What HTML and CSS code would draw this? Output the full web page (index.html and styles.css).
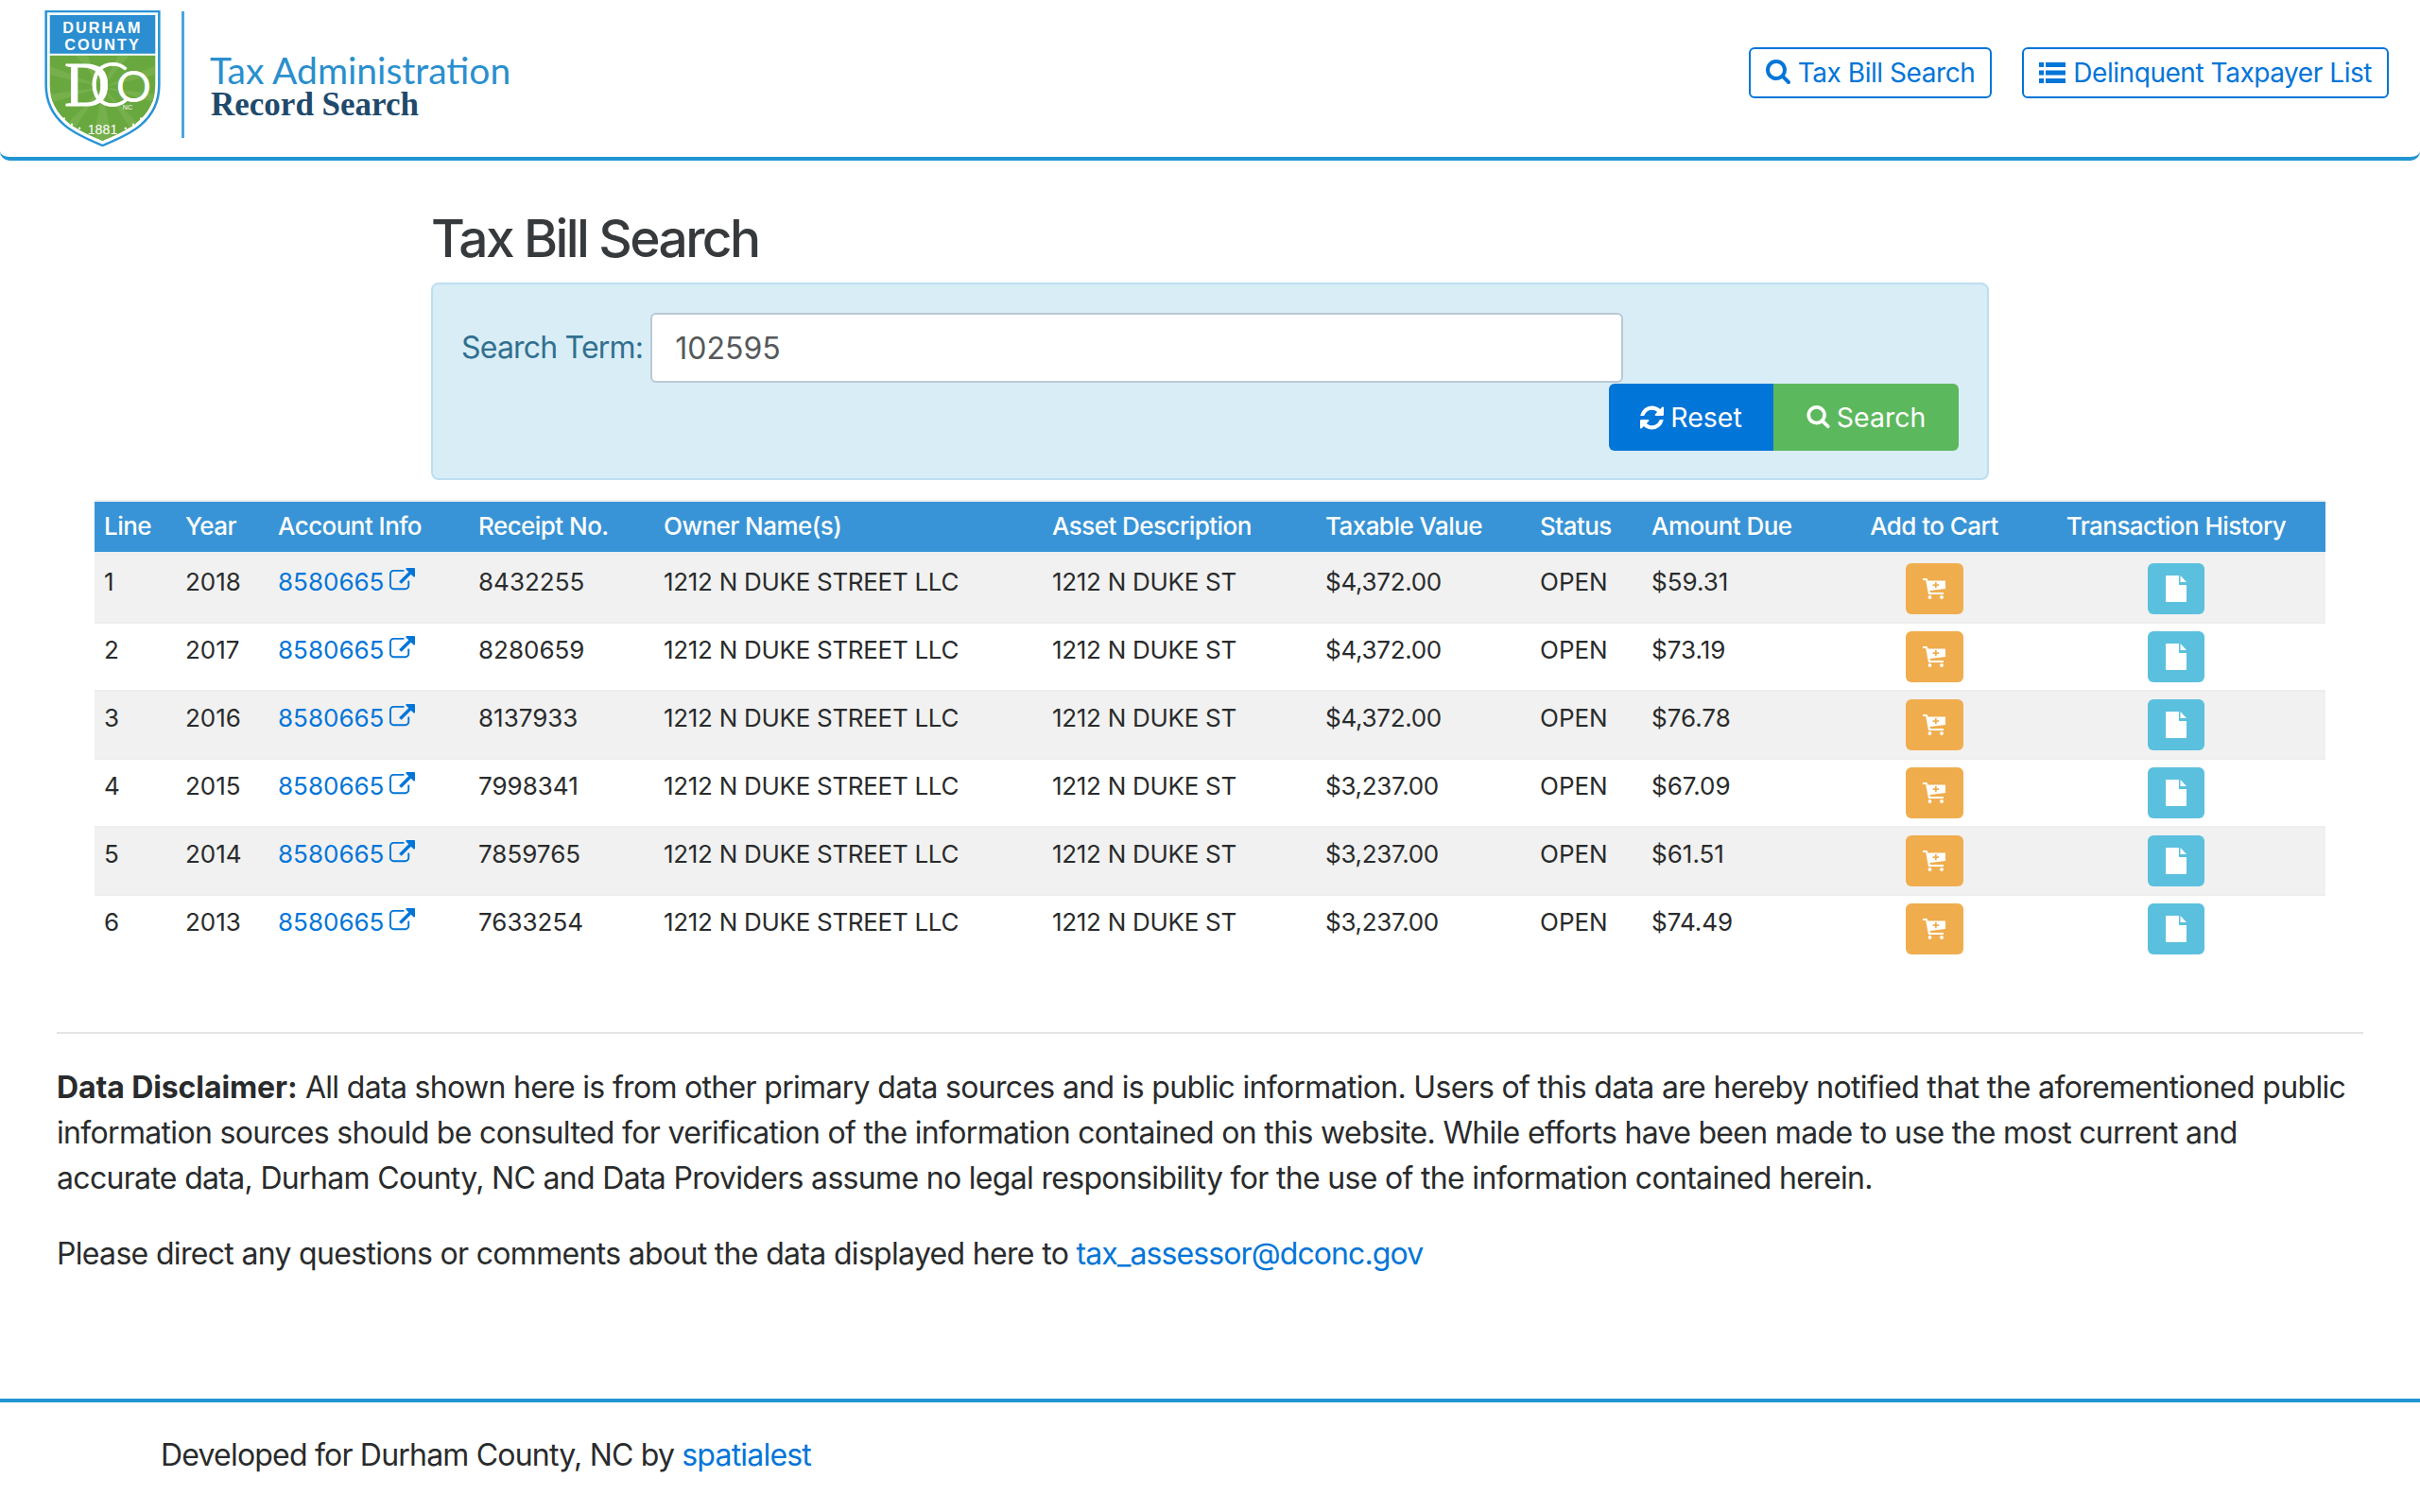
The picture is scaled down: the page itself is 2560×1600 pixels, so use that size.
FILE: index.html
```html
<!DOCTYPE html>
<html>
<head>
    <meta charset="UTF-8">
    <title>Tax Bill Search</title>
    <link rel="stylesheet" href="styles.css">
</head>
<body>
    <svg class="iconDefs" width="0" height="0">
        <symbol id="iconSearch" viewBox="0 0 1664 1792">
            <path d="M1152 704q0-185-131.5-316.5t-316.5-131.5-316.5 131.5-131.5 316.5 131.5 316.5 316.5 131.5 316.5-131.5 131.5-316.5zm512 832q0 52-38 90t-90 38q-54 0-90-38l-343-342q-179 124-399 124-143 0-273.5-55.5t-225-150-150-225-55.5-273.5 55.5-273.5 150-225 225-150 273.5-55.5 273.5 55.5 225 150 150 225 55.5 273.5q0 220-124 399l343 343q37 37 37 90z"/>
        </symbol>
        <symbol id="iconList" viewBox="0 0 28 24">
            <path d="M0 1h5v5H0zM7 1h21v5H7zM0 9.500h5v5H0zM7 9.500h21v5H7zM0 18h5v5H0zM7 18h21v5H7z"/>
        </symbol>
        <symbol id="iconRefresh" viewBox="128 128 1536 1536">
            <path d="M1639 1056q0 5-1 7-64 268-268 434.500t-478 166.500q-146 0-282.500-55t-243.500-157l-129 129q-19 19-45 19t-45-19-19-45v-448q0-26 19-45t45-19h448q26 0 45 19t19 45-19 45l-137 137q71 66 161 102t187 36q134 0 250-65t186-179q11-17 53-117 8-23 30-23h192q13 0 22.500 9.500t9.500 22.500zm25-800v448q0 26-19 45t-45 19h-448q-26 0-45-19t-19-45 19-45l138-138q-148-137-349-137-134 0-250 65t-186 179q-11 17-53 117-8 23-30 23h-199q-13 0-22.500-9.500t-9.500-22.500v-7q65-268 270-434.500t480-166.500q146 0 284 55.500t245 156.500l130-129q19-19 45-19t45 19 19 45z"/>
        </symbol>
        <symbol id="iconExternal" viewBox="0 0 1792 1792">
            <path d="M1408 928v320q0 119-84.500 203.500t-203.500 84.500h-832q-119 0-203.500-84.500t-84.500-203.500v-832q0-119 84.500-203.500t203.500-84.500h704q14 0 23 9t9 23v64q0 14-9 23t-23 9h-704q-66 0-113 47t-47 113v832q0 66 47 113t113 47h832q66 0 113-47t47-113v-320q0-14 9-23t23-9h64q14 0 23 9t9 23zm384-864v512q0 26-19 45t-45 19-45-19l-176-176-652 652q-10 10-23 10t-23-10l-114-114q-10-10-10-23t10-23l652-652-176-176q-19-19-19-45t19-45 45-19h512q26 0 45 19t19 45z"/>
        </symbol>
        <symbol id="iconCart" viewBox="0 0 24 22">
            <path d="M0 0h4.500l1 2.500H24v8.500L7.500 13l.4 2H22v2H6L3.200 2H0z M13 4v2.300h-2.400v1.600H13v2.300h1.700V7.900h2.400V6.300h-2.400V4z" fill-rule="evenodd"/>
            <circle cx="7.500" cy="20" r="1.900"/>
            <circle cx="20" cy="20" r="1.900"/>
        </symbol>
        <symbol id="iconFile" viewBox="0 0 22 28">
            <path d="M1 0h13v10h8v17a1 1 0 0 1-1 1H1a1 1 0 0 1-1-1V1a1 1 0 0 1 1-1z"/>
            <path d="M15.500 0L22 7h-6.500z"/>
        </symbol>
    </svg>

    <header class="topBar">
        <div class="brand">
            <svg class="logo" viewBox="0 0 120 142">
                <defs>
                    <clipPath id="logoGreen">
                        <path d="M5 47H115V78C115 114 82 127 60 136C38 127 5 114 5 78Z"/>
                    </clipPath>
                </defs>
                <path d="M1 1H119V78C119 118 84 131 60 141C36 131 1 118 1 78Z" fill="#fff" stroke="#2a94d6" stroke-width="2.500"/>
                <path d="M5 5H115V45H5Z" fill="#2a8ed0"/>
                <path d="M5 47H115V78C115 114 82 127 60 136C38 127 5 114 5 78Z" fill="#69a83f"/>
                <g clip-path="url(#logoGreen)">
                    <path d="M60 80L0 56V66ZM60 80L0 88V98ZM60 80L12 130H26ZM60 80L50 140H70ZM60 80L94 130H108ZM60 80L120 98V88ZM60 80L120 66V56ZM60 80L88 47H76ZM60 80L32 47H44Z" fill="#76b04c"/>
                </g>
                <text class="logoTop" x="60" y="24" text-anchor="middle">DURHAM</text>
                <text class="logoTop" x="60" y="41" text-anchor="middle">COUNTY</text>
                <text class="logoD" x="20" y="100">D</text>
                <text class="logoC" x="46" y="100">C</text>
                <text class="logoO" x="74" y="96">O</text>
                <text class="logoNc" x="81" y="104">NC</text>
                <text class="logoYear" x="60" y="129" text-anchor="middle">1881</text>
                <path d="M19 112h2v2h-2zM27 118h2v2h-2zM35 122h2v2h-2zM83 122h2v2h-2zM91 118h2v2h-2zM99 112h2v2h-2z" fill="#fff"/>
            </svg>
            <div class="brandText">
                <div class="brandTitle">Tax Administration</div>
                <div class="brandSub">Record Search</div>
            </div>
        </div>
        <nav class="topNav">
            <a class="navBtn" href="#"><svg class="icon navIcon"><use href="#iconSearch"/></svg>Tax Bill Search</a>
            <a class="navBtn" href="#"><svg class="icon navIconList"><use href="#iconList"/></svg>Delinquent Taxpayer List</a>
        </nav>
    </header>

    <main>
        <section class="searchSection">
            <h1 class="pageTitle">Tax Bill Search</h1>
            <form class="searchPanel">
                <div class="searchRow">
                    <label class="searchLabel" for="term">Search Term:</label>
                    <input class="searchInput" id="term" type="text" value="102595">
                </div>
                <div class="searchButtons">
                    <button class="btnReset" type="button"><svg class="icon btnIcon"><use href="#iconRefresh"/></svg>Reset</button>
                    <button class="btnSearch" type="button"><svg class="icon btnIcon"><use href="#iconSearch"/></svg>Search</button>
                </div>
            </form>
        </section>

        <table class="billTable">
            <colgroup>
                <col class="colLine"><col class="colYear"><col class="colAccount"><col class="colReceipt">
                <col class="colOwner"><col class="colAsset"><col class="colValue"><col class="colStatus">
                <col class="colDue"><col class="colCart"><col class="colHistory">
            </colgroup>
            <thead>
                <tr>
                    <th>Line</th><th>Year</th><th>Account Info</th><th>Receipt No.</th><th>Owner Name(s)</th>
                    <th>Asset Description</th><th>Taxable Value</th><th>Status</th><th>Amount Due</th>
                    <th class="centered">Add to Cart</th><th class="centered">Transaction History</th>
                </tr>
            </thead>
            <tbody>
                <tr>
                    <td>1</td><td>2018</td>
                    <td><a href="#">8580665<svg class="icon extIcon"><use href="#iconExternal"/></svg></a></td>
                    <td>8432255</td><td>1212 N DUKE STREET LLC</td><td>1212 N DUKE ST</td><td>$4,372.00</td><td>OPEN</td><td>$59.31</td>
                    <td class="centered"><a class="cartBtn" href="#"><svg class="icon cartIcon"><use href="#iconCart"/></svg></a></td>
                    <td class="centered"><a class="historyBtn" href="#"><svg class="icon fileIcon"><use href="#iconFile"/></svg></a></td>
                </tr>
                <tr>
                    <td>2</td><td>2017</td>
                    <td><a href="#">8580665<svg class="icon extIcon"><use href="#iconExternal"/></svg></a></td>
                    <td>8280659</td><td>1212 N DUKE STREET LLC</td><td>1212 N DUKE ST</td><td>$4,372.00</td><td>OPEN</td><td>$73.19</td>
                    <td class="centered"><a class="cartBtn" href="#"><svg class="icon cartIcon"><use href="#iconCart"/></svg></a></td>
                    <td class="centered"><a class="historyBtn" href="#"><svg class="icon fileIcon"><use href="#iconFile"/></svg></a></td>
                </tr>
                <tr>
                    <td>3</td><td>2016</td>
                    <td><a href="#">8580665<svg class="icon extIcon"><use href="#iconExternal"/></svg></a></td>
                    <td>8137933</td><td>1212 N DUKE STREET LLC</td><td>1212 N DUKE ST</td><td>$4,372.00</td><td>OPEN</td><td>$76.78</td>
                    <td class="centered"><a class="cartBtn" href="#"><svg class="icon cartIcon"><use href="#iconCart"/></svg></a></td>
                    <td class="centered"><a class="historyBtn" href="#"><svg class="icon fileIcon"><use href="#iconFile"/></svg></a></td>
                </tr>
                <tr>
                    <td>4</td><td>2015</td>
                    <td><a href="#">8580665<svg class="icon extIcon"><use href="#iconExternal"/></svg></a></td>
                    <td>7998341</td><td>1212 N DUKE STREET LLC</td><td>1212 N DUKE ST</td><td>$3,237.00</td><td>OPEN</td><td>$67.09</td>
                    <td class="centered"><a class="cartBtn" href="#"><svg class="icon cartIcon"><use href="#iconCart"/></svg></a></td>
                    <td class="centered"><a class="historyBtn" href="#"><svg class="icon fileIcon"><use href="#iconFile"/></svg></a></td>
                </tr>
                <tr>
                    <td>5</td><td>2014</td>
                    <td><a href="#">8580665<svg class="icon extIcon"><use href="#iconExternal"/></svg></a></td>
                    <td>7859765</td><td>1212 N DUKE STREET LLC</td><td>1212 N DUKE ST</td><td>$3,237.00</td><td>OPEN</td><td>$61.51</td>
                    <td class="centered"><a class="cartBtn" href="#"><svg class="icon cartIcon"><use href="#iconCart"/></svg></a></td>
                    <td class="centered"><a class="historyBtn" href="#"><svg class="icon fileIcon"><use href="#iconFile"/></svg></a></td>
                </tr>
                <tr>
                    <td>6</td><td>2013</td>
                    <td><a href="#">8580665<svg class="icon extIcon"><use href="#iconExternal"/></svg></a></td>
                    <td>7633254</td><td>1212 N DUKE STREET LLC</td><td>1212 N DUKE ST</td><td>$3,237.00</td><td>OPEN</td><td>$74.49</td>
                    <td class="centered"><a class="cartBtn" href="#"><svg class="icon cartIcon"><use href="#iconCart"/></svg></a></td>
                    <td class="centered"><a class="historyBtn" href="#"><svg class="icon fileIcon"><use href="#iconFile"/></svg></a></td>
                </tr>
            </tbody>
        </table>

        <section class="disclaimer">
            <p><strong>Data Disclaimer:</strong> All data shown here is from other primary data sources and is public information. Users of this data are hereby notified that the aforementioned public information sources should be consulted for verification of the information contained on this website. While efforts have been made to use the most current and accurate data, Durham County, NC and Data Providers assume no legal responsibility for the use of the information contained herein.</p>
            <p>Please direct any questions or comments about the data displayed here to <a class="mailLink" href="#">tax_assessor@dconc.gov</a></p>
        </section>
    </main>

    <footer class="footer">
        Developed for Durham County, NC by <a href="#">spatialest</a>
    </footer>
</body>
</html>
```
FILE: styles.css
```css
body {
    margin: 0;
    font-family: Inter, "Noto Sans", sans-serif;
    font-size: 32px;
    line-height: 48px;
    letter-spacing: -0.68px;
    color: #292b2c;
    background-color: #fff;
}

a {
    color: #0275d8;
    text-decoration: none;
}

.iconDefs {
    display: block;
}

.icon {
    fill: currentColor;
    flex: none;
}

/* top bar */
.topBar {
    display: flex;
    justify-content: space-between;
    align-items: flex-start;
    box-sizing: border-box;
    height: 170px;
    padding: 11px 33px 0 47px;
    border-bottom: 4px solid #2196d3;
    border-radius: 0 0 10px 10px;
}

.brand {
    display: flex;
    align-items: center;
}

.logo {
    width: 123px;
    height: 144px;
}

.logoTop {
    font-family: "Liberation Sans", sans-serif;
    font-size: 16px;
    font-weight: 700;
    letter-spacing: 2px;
    fill: #fff;
}

.logoD {
    font-family: "Liberation Serif", serif;
    font-size: 66px;
    fill: #fff;
    stroke: #fff;
    stroke-width: 0.800;
}

.logoC {
    font-family: Lato, sans-serif;
    font-size: 62px;
    font-weight: 300;
    fill: #fff;
    stroke: #fff;
    stroke-width: 0.800;
}

.logoO {
    font-family: Lato, sans-serif;
    font-size: 46px;
    font-weight: 400;
    fill: #fff;
}

.logoNc {
    font-family: "Liberation Sans", sans-serif;
    font-size: 7px;
    letter-spacing: 0;
    fill: #fff;
}

.logoYear {
    font-family: "Liberation Sans", sans-serif;
    font-size: 14px;
    letter-spacing: 0;
    fill: #fff;
}

.brandText {
    margin-left: 22px;
    margin-top: -8px;
    padding: 20px 0 0 27px;
    box-sizing: border-box;
    height: 134px;
    border-left: 3px solid #4aa5dc;
    display: flex;
    flex-direction: column;
    justify-content: center;
    letter-spacing: 0;
}

.brandTitle {
    font-family: Lato, sans-serif;
    font-size: 39px;
    line-height: 44px;
    color: #2a8fce;
}

.brandSub {
    font-family: "Liberation Serif", serif;
    font-size: 35px;
    font-weight: 700;
    line-height: 30px;
    margin-left: 1px;
    color: #1f4a6b;
}

.topNav {
    display: flex;
    gap: 32px;
    margin-top: 39px;
}

.navBtn {
    display: flex;
    align-items: center;
    height: 54px;
    box-sizing: border-box;
    padding: 0 16px;
    font-size: 28px;
    letter-spacing: -0.45px;
    border: 2px solid #0275d8;
    border-radius: 6px;
}

.navIcon {
    width: 26px;
    height: 28px;
    margin-right: 8px;
}

.navIconList {
    width: 28px;
    height: 24px;
    margin-right: 8px;
}

/* search form */
.searchSection {
    width: 1648px;
    margin: 0 auto;
    padding-top: 49px;
}

.pageTitle {
    margin: 0 0 13px;
    font-size: 55px;
    font-weight: 500;
    line-height: 67px;
    letter-spacing: -2.600px;
    color: #373a3c;
}

.searchPanel {
    box-sizing: border-box;
    height: 209px;
    padding: 30px;
    background-color: #d9edf7;
    border: 2px solid #bcdff1;
    border-radius: 8px;
}

.searchRow {
    display: flex;
    align-items: center;
    gap: 8px;
}

.searchLabel {
    color: #31708f;
    letter-spacing: -0.8px;
}

.searchInput {
    box-sizing: border-box;
    width: 1029px;
    height: 74px;
    padding: 0 24px;
    font-family: inherit;
    font-size: 32px;
    color: #55595c;
    background-color: #fff;
    border: 2px solid #b9c9d4;
    border-radius: 6px;
}

.searchButtons {
    display: flex;
    justify-content: flex-end;
    margin-top: 1px;
}

.searchButtons button {
    display: flex;
    align-items: center;
    justify-content: center;
    height: 71px;
    padding: 0;
    font-family: inherit;
    font-size: 28.500px;
    color: #fff;
    border: 0;
}

.btnReset {
    width: 174px;
    background-color: #0275d8;
    border-radius: 6px 0 0 6px;
}

.btnSearch {
    width: 196px;
    background-color: #5cb85c;
    border-radius: 0 6px 6px 0;
}

.btnIcon {
    width: 25px;
    height: 26px;
    margin-right: 7px;
}

/* bills */
.billTable {
    width: 2360px;
    margin: 21px 100px 0;
    table-layout: fixed;
    border-collapse: collapse;
    font-size: 26px;
    line-height: 39px;
    letter-spacing: 0;
}

.colLine { width: 86px; }
.colYear { width: 98px; }
.colAccount { width: 212px; }
.colReceipt { width: 196px; }
.colOwner { width: 411px; }
.colAsset { width: 289px; }
.colValue { width: 227px; }
.colStatus { width: 118px; }
.colDue { width: 211px; }
.colCart { width: 196px; }
.colHistory { width: 316px; }

.billTable th {
    padding: 6px 10px 8px;
    font-weight: 500;
    letter-spacing: -0.55px;
    text-align: left;
    color: #fff;
    background-color: #3894d6;
    border-top: 2px solid #eceeef;
    border-bottom: 4px solid #eceeef;
}

.billTable td {
    padding: 8px 10px;
    vertical-align: top;
    border-top: 2px solid #eceeef;
}

.billTable td:nth-child(5),
.billTable td:nth-child(6),
.billTable td:nth-child(7) {
    letter-spacing: -0.3px;
}

.billTable tbody tr:nth-child(odd) {
    background-color: #f1f1f1;
}

.billTable .centered {
    text-align: center;
}

.extIcon {
    width: 27px;
    height: 27px;
    margin-left: 6px;
    vertical-align: -3px;
}

.cartBtn,
.historyBtn {
    display: inline-flex;
    align-items: center;
    justify-content: center;
    height: 54px;
    color: #fff;
    border-radius: 6px;
    vertical-align: top;
}

.cartBtn {
    width: 61px;
    background-color: #f0ad4e;
}

.historyBtn {
    width: 60px;
    background-color: #5bc0de;
}

.cartIcon {
    width: 24px;
    height: 22px;
}

.fileIcon {
    width: 22px;
    height: 28px;
}

/* disclaimer and footer */
.disclaimer {
    margin: 74px 60px 0;
    padding-top: 33px;
    border-top: 2px solid #e4e4e4;
}

.disclaimer p {
    margin: 0 0 32px;
}

.disclaimer strong {
    font-weight: 700;
    letter-spacing: -0.1px;
}

.mailLink {
    letter-spacing: -0.9px;
}

.footer {
    margin-top: 129px;
    padding: 32px 170px 0;
    letter-spacing: -0.8px;
    border-top: 4px solid #2196d3;
}
```
